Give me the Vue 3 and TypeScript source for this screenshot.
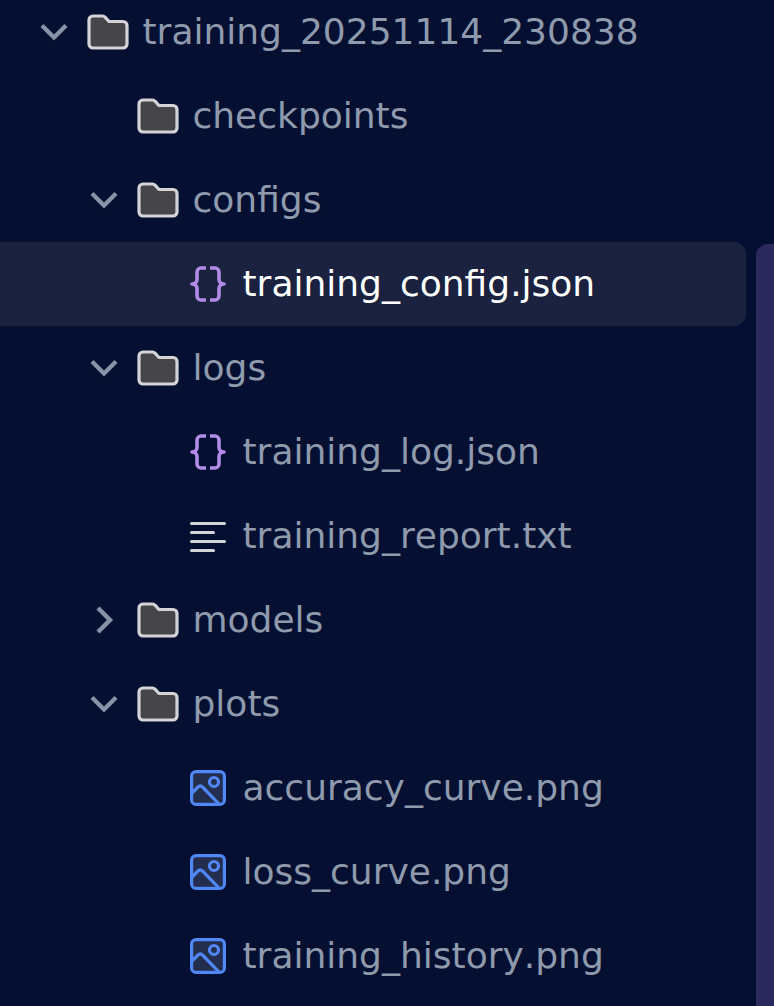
<script setup lang="ts">
type Kind = 'folder' | 'json' | 'txt' | 'image'
interface Row { name: string; depth: number; kind: Kind; chevron?: 'down' | 'right'; selected?: boolean }
const rows: Row[] = [
  { name: 'training_20251114_230838', depth: 0, kind: 'folder', chevron: 'down' },
  { name: 'checkpoints', depth: 1, kind: 'folder' },
  { name: 'configs', depth: 1, kind: 'folder', chevron: 'down' },
  { name: 'training_config.json', depth: 2, kind: 'json', selected: true },
  { name: 'logs', depth: 1, kind: 'folder', chevron: 'down' },
  { name: 'training_log.json', depth: 2, kind: 'json' },
  { name: 'training_report.txt', depth: 2, kind: 'txt' },
  { name: 'models', depth: 1, kind: 'folder', chevron: 'right' },
  { name: 'plots', depth: 1, kind: 'folder', chevron: 'down' },
  { name: 'accuracy_curve.png', depth: 2, kind: 'image' },
  { name: 'loss_curve.png', depth: 2, kind: 'image' },
  { name: 'training_history.png', depth: 2, kind: 'image' },
]
const indent = (d: number) => ({ paddingLeft: `${37 + d * 50}px` })
</script>

<template>
  <div class="panel">
    <ul class="tree">
      <li v-for="r in rows" :key="r.name" class="row" :class="{ selected: r.selected }" :style="indent(r.depth)">
        <span class="chev">
          <svg v-if="r.chevron === 'down'" width="30" height="30" viewBox="0 0 30 30" fill="none" stroke="#8792a6" stroke-width="4.4">
            <path d="M5 8.500 17 20.500 29 8.500" />
          </svg>
          <svg v-else-if="r.chevron === 'right'" width="30" height="30" viewBox="0 0 30 30" fill="none" stroke="#8792a6" stroke-width="4.4">
            <path d="M11 3 23 15 11 27" />
          </svg>
        </span>
        <svg v-if="r.kind === 'folder'" class="folder" width="42" height="36" viewBox="0 0 42 36">
          <path d="M6 2h9.500c1 0 1.800.4 2.500 1.100L22 7.500h14c2.200 0 4 1.800 4 4V30c0 2.200-1.800 4-4 4H6c-2.200 0-4-1.800-4-4V6c0-2.200 1.800-4 4-4z"
            fill="#464649" stroke="#d4d4d8" stroke-width="3.200" stroke-linejoin="round" />
        </svg>
        <svg v-else-if="r.kind === 'json'" class="file" width="36" height="36" viewBox="0 0 36 36" fill="none" stroke="#b08be8" stroke-width="3.600" stroke-linejoin="round">
          <path d="M16 2h-5C8.800 2 7 3.800 7 6v7.500C7 16 5 18 2 18c3 0 5 2 5 4.500V30c0 2.200 1.800 4 4 4h5" />
          <path d="M20 2h5c2.200 0 4 1.800 4 4v7.500c0 2.500 2 4.500 5 4.500-3 0-5 2-5 4.500V30c0 2.200-1.800 4-4 4h-5" />
        </svg>
        <svg v-else-if="r.kind === 'txt'" class="file" width="36" height="36" viewBox="0 0 36 36" fill="none" stroke="#d4d4d8" stroke-width="3" stroke-linecap="round">
          <path d="M1.500 5.500h33M1.500 14.500h22M1.500 23.500h33M1.500 32.500h22" />
        </svg>
        <svg v-else class="file" width="36" height="36" viewBox="0 0 36 36" fill="none" stroke="#5087f5" stroke-width="3.200" stroke-linecap="round" stroke-linejoin="round">
          <rect x="1.600" y="1.600" width="32.800" height="32.800" rx="4.500" fill="#232e4e" />
          <circle cx="24" cy="12" r="4.500" />
          <path d="M2 23 8 17c1.500-1.500 3-1.500 4.500 0L28 33" />
        </svg>
        <span class="name">{{ r.name }}</span>
      </li>
    </ul>
    <div class="track"></div>
    <div class="scrollbar"></div>
  </div>
</template>

<style>
html, body { margin: 0; background: #040f31; }
</style>

<style scoped>
.panel {
  position: relative;
  width: 774px;
  height: 1006px;
  overflow: hidden;
  background: #040f31;
  font-family: "DejaVu Sans", sans-serif;
}
.tree {
  list-style: none;
  margin: -10px 0 0;
  padding: 0;
  width: 746px;
}
.row {
  display: flex;
  align-items: center;
  height: 84px;
  color: #8f9aad;
  font-size: 36px;
  font-kerning: none;
  white-space: nowrap;
}
.name { margin-top: -2px; }
.row.selected {
  background: #1a2240;
  border-radius: 0 12px 12px 0;
  color: #ffffff;
}
.chev {
  display: flex;
  width: 30px;
  height: 30px;
  flex: none;
  margin-right: 20px;
}
.chev svg { overflow: visible; }
.folder { flex: none; margin-right: 13.500px; }
.file { flex: none; margin-left: 3px; margin-right: 16.500px; }
.track {
  position: absolute;
  left: 751px;
  top: 0;
  right: 0;
  bottom: 0;
  background: #050f33;
}
.scrollbar {
  position: absolute;
  left: 756px;
  top: 244px;
  width: 30px;
  height: 800px;
  border-radius: 12px;
  background: #2b2a5c;
}
</style>
